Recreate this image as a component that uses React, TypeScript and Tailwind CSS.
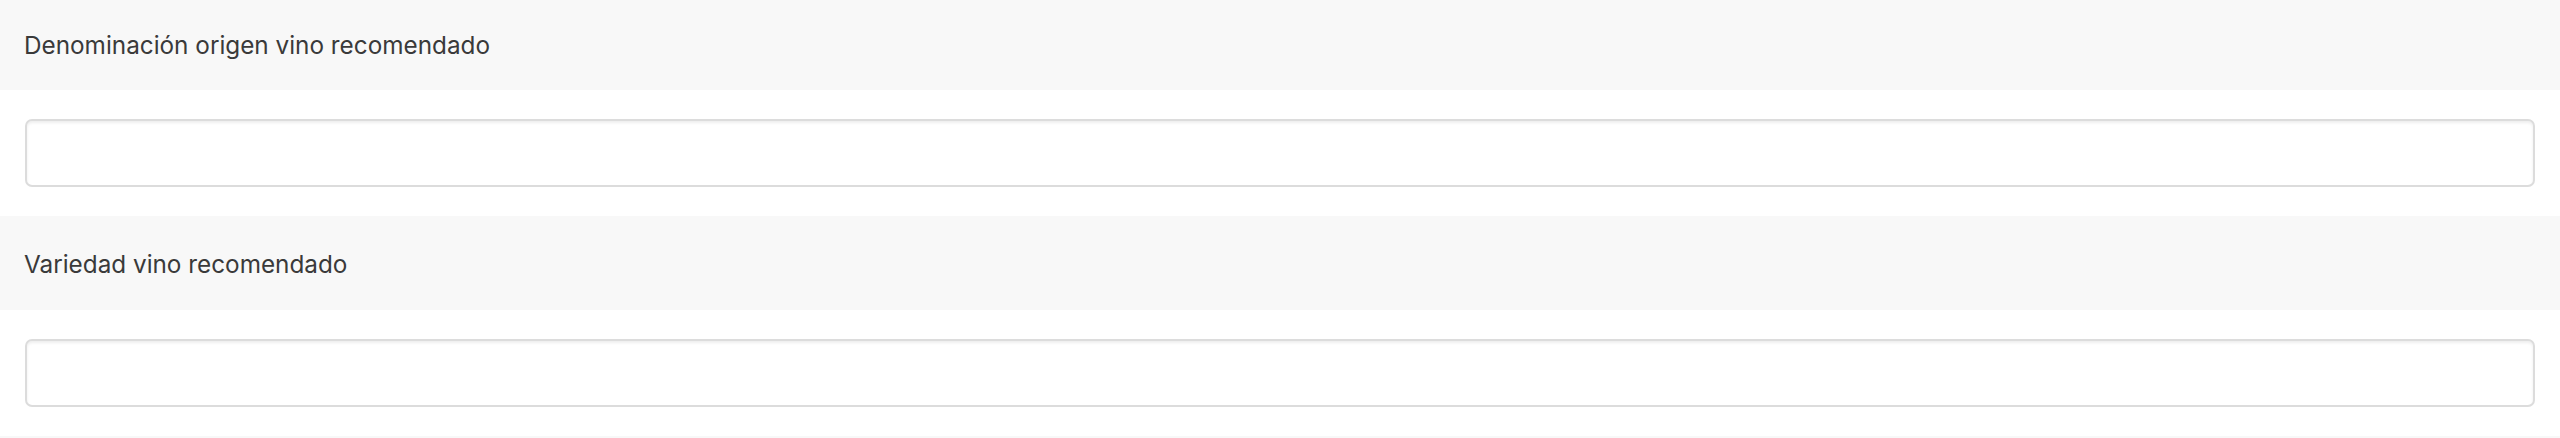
import React from "react";

const fields = ["Denominación origen vino recomendado", "Variedad vino recomendado"];

function FieldRow({ label, first }: { label: string; first?: boolean }) {
  return (
    <div>
      <div
        className={`${first ? "h-[90px]" : "h-[94px]"} bg-[#f8f8f8] flex items-center px-[24px] text-[24.3px] text-[#3a3a3a]`}
        style={{ fontFamily: "Inter, 'Noto Sans', sans-serif" }}
      >
        <span className={first ? "" : "pt-[2px]"}>{label}</span>
      </div>
      <div className="bg-white pl-[25px] pr-[25px] py-[29px]">
        <input
          type="text"
          className="block w-full h-[68px] rounded-[7px] border-2 border-[#dcdcdc] bg-white shadow-[inset_0_2px_3px_rgba(0,0,0,0.07)] outline-none"
        />
      </div>
    </div>
  );
}

export default function App() {
  return (
    <div className="w-[2560px] h-[438px] overflow-hidden bg-white">
      {fields.map((f, i) => (
        <FieldRow key={f} label={f} first={i === 0} />
      ))}
      <div className="h-[2px] bg-[#f8f8f8]" />
    </div>
  );
}
